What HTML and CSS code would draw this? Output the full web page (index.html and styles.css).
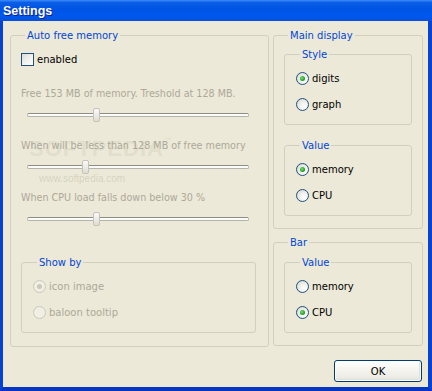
FILE: index.html
```html
<!DOCTYPE html>
<html>
  <head>
    <title>Settings</title>
    <link rel="stylesheet" href="styles.css">
  </head>
  <body>
    <div class="window">
      <div class="titlebar">Settings</div>

      <div class="client">
        <div class="columns">
          <fieldset class="group autogroup">
            <legend>Auto free memory</legend>

            <label class="row checkrow">
              <span class="checkbox"></span>
              <span>enabled</span>
            </label>

            <div class="hint first">Free 153 MB of memory. Treshold at 128 MB.</div>
            <div class="slider"><span class="thumb" style="left: 66px"></span></div>

            <div class="hint">When will be less than 128 MB of free memory</div>
            <div class="slider"><span class="thumb" style="left: 55px"></span></div>

            <div class="hint">When CPU load falls down below 30 %</div>
            <div class="slider"><span class="thumb" style="left: 66px"></span></div>

            <fieldset class="group inner showby">
              <legend>Show by</legend>
              <label class="row disabled"><span class="radio on"></span><span>icon image</span></label>
              <label class="row disabled"><span class="radio"></span><span>baloon tooltip</span></label>
            </fieldset>

            <div class="watermark">SOFTPEDIA<span class="tm">™</span></div>
            <div class="watermark small">www.softpedia.com</div>
          </fieldset>

          <div class="rightcol">
            <fieldset class="group maindisplay">
              <legend>Main display</legend>
              <fieldset class="group inner">
                <legend>Style</legend>
                <label class="row"><span class="radio on"></span><span>digits</span></label>
                <label class="row"><span class="radio"></span><span>graph</span></label>
              </fieldset>
              <fieldset class="group inner second">
                <legend>Value</legend>
                <label class="row"><span class="radio on"></span><span>memory</span></label>
                <label class="row"><span class="radio"></span><span>CPU</span></label>
              </fieldset>
            </fieldset>

            <fieldset class="group bar">
              <legend>Bar</legend>
              <fieldset class="group inner">
                <legend>Value</legend>
                <label class="row"><span class="radio"></span><span>memory</span></label>
                <label class="row"><span class="radio on"></span><span>CPU</span></label>
              </fieldset>
            </fieldset>
          </div>
        </div>

        <div class="buttons">
          <button class="okbutton">OK</button>
        </div>
      </div>
    </div>
  </body>
</html>
```

FILE: styles.css
```css
body {
  margin: 0;
  font-family: "DejaVu Sans", sans-serif;
  font-size: 9.6px;
  color: #000;
}
.window {
  width: 432px;
  height: 391px;
  box-sizing: border-box;
  display: flex;
  flex-direction: column;
  background: #0054e3;
  border-left: 3px solid #0842d0;
  border-right: 4px solid #0842d0;
  border-bottom: 4px solid #0836c4;
}
.titlebar {
  height: 21px;
  margin: 0 -4px 0 -3px;
  padding-left: 3px;
  box-sizing: border-box;
  line-height: 22px;
  color: #fff;
  font-family: "Liberation Sans", sans-serif;
  font-weight: bold;
  font-size: 12.5px;
  text-shadow: 1px 1px 0 #0a1e8c;
  background: linear-gradient(to bottom, #3d8cf9 0%, #0a5ee6 12%, #0054e3 40%, #0058ee 80%, #0a4fd5 100%);
}
.client {
  flex: 1;
  background: #ece9d8;
  padding: 8px 6px 0 7px;
}
.columns {
  display: grid;
  grid-template-columns: 259px 150px;
  column-gap: 4px;
}
.group {
  margin: 0;
  padding: 0 10px;
  border: 1px solid #d0d0bf;
  border-radius: 3px;
  box-sizing: border-box;
  min-width: 0;
}
.group legend {
  padding: 0 2px;
  margin-left: 4px;
  color: #0046d5;
  line-height: 13px;
  font-size: 10px;
}
.autogroup {
  position: relative;
  height: 318px;
}
.row {
  display: flex;
  align-items: center;
  gap: 3px;
  height: 15px;
  line-height: 15px;
  font-size: 10px;
}
.checkrow {
  margin-top: 10px;
}
.checkbox {
  width: 13px;
  height: 13px;
  box-sizing: border-box;
  border: 1px solid #1c5180;
  background: linear-gradient(135deg, #dcdcd7 0%, #f4f4f2 60%, #fff 100%);
}
.hint {
  color: #aca899;
  line-height: 13px;
  margin-top: 17px;
}
.hint.first {
  margin-top: 20px;
}
.slider {
  position: relative;
  height: 14px;
  margin: 8px 9px 0 6px;
}
.slider::before {
  content: "";
  position: absolute;
  left: 0;
  right: 0;
  top: 5px;
  height: 4px;
  box-sizing: border-box;
  border: 1px solid #b5b4ab;
  border-top-color: #8e8d86;
  border-radius: 2px;
  background: #fbfbf9;
}
.thumb {
  position: absolute;
  top: 0;
  width: 7px;
  height: 14px;
  box-sizing: border-box;
  border: 1px solid #c4c3ba;
  border-radius: 2px;
  background: linear-gradient(to bottom, #fafaf8, #dedcd3);
}
.inner {
  height: 77px;
  padding: 0 11px;
}
.inner .row {
  margin-top: 11px;
}
.inner legend + .row {
  margin-top: 10px;
}
.showby {
  margin: 30px 2px 0 0;
}
.radio {
  position: relative;
  width: 13px;
  height: 13px;
  box-sizing: border-box;
  border-radius: 50%;
  border: 1px solid #1c5180;
  background: radial-gradient(circle at 65% 65%, #fff 0%, #f1f1ed 40%, #d2d1c9 100%);
}
.radio.on::after {
  content: "";
  position: absolute;
  left: 3px;
  top: 3px;
  width: 5px;
  height: 5px;
  border-radius: 50%;
  background: radial-gradient(circle at 40% 40%, #7be07b 0%, #21a121 60%, #178517 100%);
}
.disabled {
  color: #aca899;
}
.disabled .radio {
  border-color: #cac8bb;
  background: #f1efe4;
}
.disabled .radio.on::after {
  background: #cac8bb;
}
.watermark {
  position: absolute;
  left: 18px;
  top: 94px;
  font-family: "Liberation Sans", sans-serif;
  font-size: 22px;
  font-weight: bold;
  letter-spacing: 1px;
  color: rgba(150, 145, 125, 0.14);
  pointer-events: none;
}
.watermark .tm {
  font-size: 8px;
  vertical-align: top;
}
.watermark.small {
  left: 28px;
  top: 131px;
  font-size: 10px;
  font-weight: normal;
  letter-spacing: 0;
  color: rgba(150, 145, 125, 0.28);
}
.rightcol {
  display: flex;
  flex-direction: column;
  gap: 7px;
}
.maindisplay {
  height: 200px;
}
.maindisplay > .inner:first-of-type {
  margin-top: 6px;
}
.maindisplay > .second {
  margin-top: 14px;
}
.bar {
  height: 110px;
}
.bar > .inner {
  margin-top: 7px;
}
.buttons {
  display: flex;
  justify-content: flex-end;
  margin-top: 13px;
}
.okbutton {
  width: 88px;
  height: 22px;
  padding: 0;
  font-family: "DejaVu Sans", sans-serif;
  font-size: 10px;
  color: #000;
  border: 1px solid #003c74;
  border-radius: 3px;
  background: linear-gradient(to bottom, #fff 0%, #f4f3ee 50%, #ecebe6 85%, #d6d0c5 100%);
  box-shadow: inset 0 0 0 1px #fff, inset -1px -1px 0 1px #e3e1d8;
}
```
